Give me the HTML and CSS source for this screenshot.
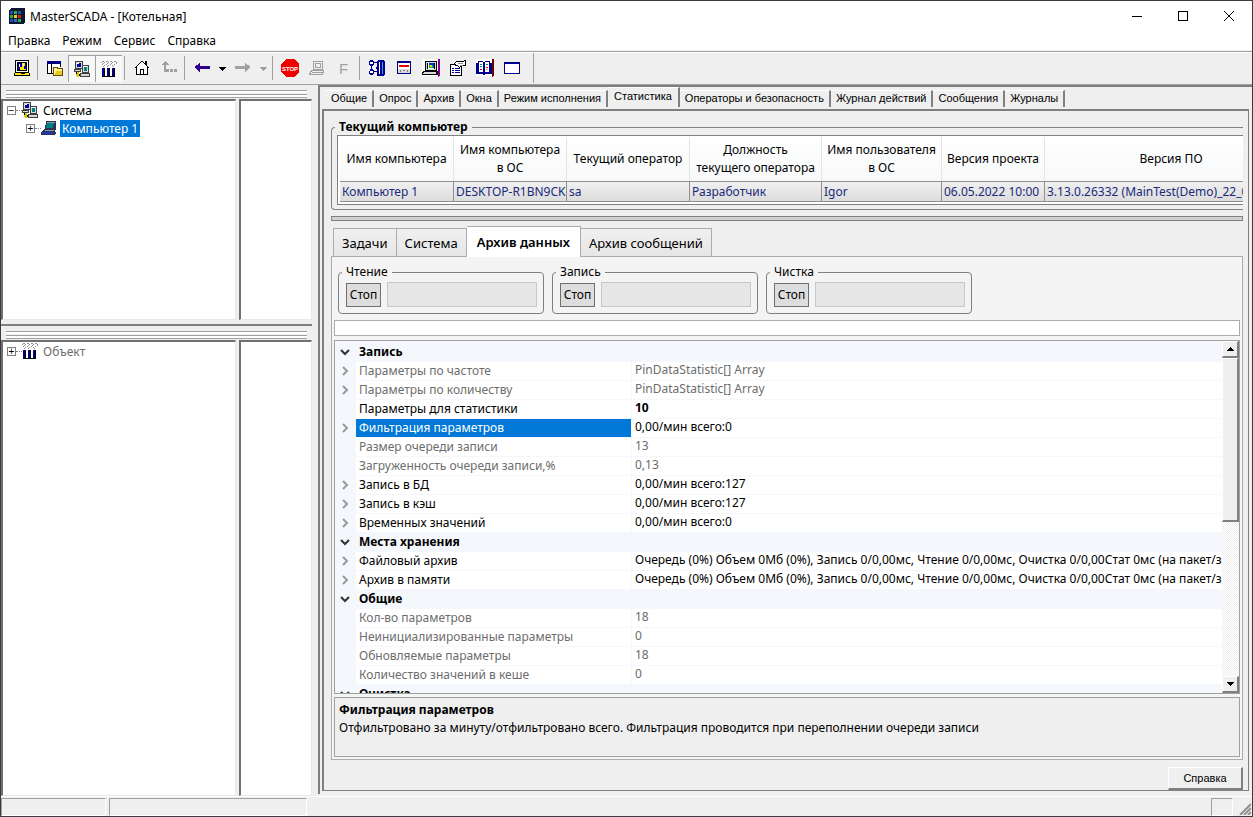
FILE: index.html
```
<!DOCTYPE html>
<html lang="ru">
<head>
  <meta charset="UTF-8">
  <meta name="viewport" content="width=device-width, initial-scale=1">
  <title>MasterSCADA - [Котельная]</title>
  <link rel="stylesheet" href="styles.css">
</head>
<body>
  <!-- shared icons -->
  <svg class="sprite" aria-hidden="true">
    <symbol id="i-net" viewBox="0 0 16 16">
      <path fill="#404040" d="M1 0h8v8H1zM0 8h7v3H0zM8 4h7v8H8zM6 12h10v4H6z"/>
      <path fill="#d8d8d8" d="M2 1h6v6H2zM1 9h5v1H1zM9 5h5v6H9zM7 13h8v2H7z"/>
      <path fill="#0000a0" d="M3 2h4v4H3z"/>
      <path fill="#fff" d="M3 2h2v1H3zM9 5h4v1H9z"/>
      <path fill="#008080" d="M10 6h3v4h-3z"/>
      <path fill="#000" d="M2 11h1v2H2zM5 13h1v2H5z"/>
      <path fill="#d8c800" d="M3 11h2v5H3zM2 13h1v2H2z"/>
    </symbol>
    <symbol id="i-plant" viewBox="0 0 16 16">
      <path fill="#909090" d="M0 1h1v1H0zM1 0h2v1H1zM3 1h1v1H3zM2 2h1v1H2zM5 0h2v1H5zM7 1h1v1H7zM6 2h1v1H6zM9 0h2v1H9zM11 1h1v1h-1zM10 2h1v1h-1zM13 0h2v1h-2zM15 1h1v2h-1zM1 3h1v1H1zM3 4h1v1H3zM5 3h1v1H5zM7 4h1v1H7zM9 3h1v1H9zM11 4h1v1h-1zM13 3h1v1h-1zM2 5h1v1H2zM6 5h1v1H6zM12 5h1v1h-1z"/>
      <path fill="#fff" d="M1 7h13v8H1z"/>
      <path fill="#000080" d="M1 7h2v8H1zM6 7h2v8H6zM11 7h2v8h-2z"/>
      <path fill="#000" d="M3 7h1v8H3zM8 7h1v8H8zM13 7h1v8h-1zM1 15h13v1H1z"/>
    </symbol>
    <symbol id="i-laptop" viewBox="0 0 16 16">
      <path fill="#303050" d="M5 1h10v9h-1v2h1v1l-2 2H0v-3l4-3z"/>
      <path fill="#008080" d="M6 3h7l-1 5H5z"/>
      <path fill="#80a0b0" d="M6 2h8v1H6zM4 10h9v1H4z"/>
      <path fill="#2038b0" d="M1 12h11v2H1z"/>
    </symbol>
    <symbol id="i-down" viewBox="0 0 10 10">
      <path fill="none" stroke="#333" stroke-width="2" d="M1 3l4 4 4-4"/>
    </symbol>
    <symbol id="i-right" viewBox="0 0 10 10">
      <path fill="none" stroke="#999" stroke-width="2" d="M3 1l4 4-4 4"/>
    </symbol>
  </svg>

  <div class="window">
    <header class="titlebar">
      <svg class="logo" viewBox="0 0 16 16">
        <path fill="#101830" d="M2 0h14v14l-2 2H0V2z"/>
        <path fill="#2050b0" d="M1 3h3v3H1zM9 3h3v3H9zM1 11h3v3H1z"/>
        <path fill="#30b040" d="M5 3h3v3H5zM1 7h3v3H1zM9 11h3v3H9z"/>
        <path fill="#f0d020" d="M5 7h3v3H5z"/>
        <path fill="#d02020" d="M9 7h3v3H9z"/>
        <path fill="#3070d0" d="M5 11h3v3H5z"/>
      </svg>
      <h1>MasterSCADA - [Котельная]</h1>
      <div class="window-buttons">
        <button aria-label="Свернуть"><svg viewBox="0 0 10 10"><path d="M0 5.500h10"/></svg></button>
        <button aria-label="Развернуть"><svg viewBox="0 0 10 10"><path d="M.5.5h9v9h-9z"/></svg></button>
        <button aria-label="Закрыть"><svg class="smooth" viewBox="0 0 10 10"><path d="M0 0l10 10M10 0L0 10"/></svg></button>
      </div>
    </header>

    <nav class="menubar">
      <button>Правка</button>
      <button>Режим</button>
      <button>Сервис</button>
      <button>Справка</button>
    </nav>

    <div class="toolbar">
      <div class="tools">
        <button class="tool" aria-label="Мастер"><svg viewBox="0 0 16 16">
          <path fill="#000" d="M1 0h14v13h1v3H0v-3h1z"/><path fill="#fff" d="M2 1h12v11H2z"/><path fill="#000" d="M3 2h10v9H3z"/>
          <path fill="#000090" d="M4 3h8v7H4z"/><path fill="#ffe800" d="M8 3h3v3h-1v3h2v1H6V7h2zM1 13h5l1 1h3l1-1h4v2H1z"/><path fill="#fff" d="M9 4h1v2H9zM5 4h1v3H5z"/>
        </svg></button>
      </div>
      <div class="tools">
        <button class="tool" aria-label="Проект"><svg viewBox="0 0 16 16">
          <path fill="#000080" d="M0 1h14v3H0z"/><path fill="#000" d="M0 4h1v9H0zM4 4h1v9H4zM0 13h6v1H0zM13 4h1v3h-1z"/><path fill="#fff" d="M1 4h3v9H1zM5 4h8v3H5z"/><path fill="#605000" d="M6 7h5v1h5v8H6z"/><path fill="#fff08a" d="M7 8h3v1h5v6H7z"/><path fill="#e8c820" d="M9 11h6v4H8z"/>
        </svg></button>
        <button class="tool pressed" aria-label="Система"><svg viewBox="0 0 16 16"><use href="#i-net"/></svg></button>
        <button class="tool pressed" aria-label="Объект"><svg viewBox="0 0 16 16"><use href="#i-plant"/></svg></button>
      </div>
      <div class="tools">
        <button class="tool" aria-label="Домой"><svg viewBox="0 0 16 16">
          <path fill="#fff" d="M8 1l5 6v7H3V7z"/><path fill="none" stroke="#000" d="M.5 8.500L8 1l7.500 7.500M2.500 7v7.500h11V7M11.500 4V1.500h1V5M6.500 14V9.500h3V14"/>
        </svg></button>
        <button class="tool" aria-label="Вверх" disabled><svg viewBox="0 0 16 16">
          <path fill="#a0a0a0" d="M0 5l4-4 4 4H5v4h3v3H3V5zM9 9h3v3H9zM13 9h3v3h-3z"/>
        </svg></button>
      </div>
      <div class="tools">
        <button class="tool" aria-label="Назад"><svg viewBox="0 0 16 16"><path fill="#300090" d="M0 7l6-4v3h10v3H6v3z"/></svg></button>
        <button class="tool drop" aria-label="История назад"><svg viewBox="0 0 8 16"><path d="M1 7h7v1H7v1H6v1H5v1H4v-1H3V9H2V8H1z"/></svg></button>
        <button class="tool" aria-label="Вперёд" disabled><svg viewBox="0 0 16 16"><path fill="#a0a0a0" d="M16 7l-6-4v3H0v3h10v3z"/></svg></button>
        <button class="tool drop" aria-label="История вперёд" disabled><svg viewBox="0 0 8 16"><path fill="#a0a0a0" d="M1 7h7v1H7v1H6v1H5v1H4v-1H3V9H2V8H1z"/></svg></button>
      </div>
      <div class="tools">
        <button class="tool stop" aria-label="Стоп"><svg viewBox="0 0 18 18">
          <path fill="#f00000" d="M5 0h8l5 5v8l-5 5H5l-5-5V5z"/><text x="9" y="12">STOP</text>
        </svg></button>
        <button class="tool" aria-label="Компьютер" disabled><svg viewBox="0 0 16 16">
          <path fill="none" stroke="#a0a0a0" d="M4.500 1.500h9v8h-9zM6.500 3.500h5v4h-5zM2.500 10.500h12l-1 4h-13z"/><path fill="#a0a0a0" d="M3 12h10v1H3z"/>
        </svg></button>
        <button class="tool letter" disabled>F</button>
      </div>
      <div class="tools">
        <button class="tool" aria-label="Связи"><svg viewBox="0 0 16 16">
          <path fill="#000090" d="M1 0h3v1h1v1h3v1H5v2H4v1H3v3h1v1h1v1h3v1H5v2H4v1H1v-1H0v-3h1V9h1V6H1V5H0V1h1zM9 0h3v16H8V9H7V7h1V1h1zM12 0h3v1h1v14h-1v1h-3z"/>
          <path fill="#fff" d="M1 2h3v2H1zM1 11h3v2H1zM10 2h1v12h-1z"/><path fill="#40a0e0" d="M13 2h1v12h-1z"/>
        </svg></button>
        <button class="tool" aria-label="Сообщения"><svg viewBox="0 0 16 16">
          <path fill="#000090" d="M1 1h14v13H1z"/><path fill="#fff" d="M2 3h12v6H2z"/><path fill="#e00000" d="M3 5h10v2H3z"/><path fill="#d8d8d8" d="M2 9h12v4H2z"/><path fill="#808080" d="M4 10h1v2H4zM7 10h2v1H7zM11 10h1v2h-1z"/>
        </svg></button>
        <button class="tool large" aria-label="Мнемосхема"><svg viewBox="0 0 18 18">
          <path fill="#800090" d="M16 0h2v16l-2 2z"/><path fill="#fff" d="M0 0h16v17H0z"/><path fill="#000" d="M3 2h12v10H3zM1 12h15v4H0v-3z"/><path fill="#d8d8d8" d="M4 3h10v8H4zM2 13h12v2H1z"/><path fill="#000" d="M5 4h8v6H5z"/><path fill="#fff" d="M6 4h6v6H6z"/><path fill="#0030d0" d="M7 4h5v5H7z"/><path fill="#00b050" d="M7 6h4v3H7z"/><path fill="#f0e000" d="M8 6h2v2H8z"/>
        </svg></button>
        <button class="tool" aria-label="Свойства"><svg viewBox="0 0 16 16">
          <path fill="#fff" stroke="#000" d="M.5 4.500h11v11H.5z"/><path fill="#000090" d="M2 8h2v1H2zM5 8h5v1H5zM2 10h2v1H2zM5 10h5v1H5zM2 12h2v1H2zM5 12h5v1H5z"/><path fill="#fff" stroke="#000" d="M3.500 4.500l3-3h6l3-1v5h-3l-3 2-2-2z"/><path fill="#909090" d="M8 3h5v1H8zM10 5h3v1h-3z"/>
        </svg></button>
        <button class="tool large" aria-label="Журнал"><svg viewBox="0 0 18 18">
          <path fill="#700000" d="M16 0h2v16l-2 2z"/><path fill="#fff" d="M0 0h16v17H0z"/><path fill="#000090" d="M0 4h2V2h5v1h2V2h5v2h2v11H9v1H7v-1H0z"/><path fill="#fff" d="M3 3h4v10H3zM9 3h4v10H9z"/><path fill="#008080" d="M4 5h2v1H4zM4 7h2v1H4zM10 5h2v1h-2z"/><path fill="#c00000" d="M4 10h2v1H4zM10 8h2v1h-2z"/><path fill="#d0b000" d="M10 10h2v1h-2z"/>
        </svg></button>
        <button class="tool" aria-label="Окно"><svg viewBox="0 0 16 16">
          <path fill="#000090" d="M0 2h16v12H0z"/><path fill="#fff" d="M1 4h14v9H1z"/>
        </svg></button>
      </div>
    </div>

    <div class="workspace">
      <aside class="side">
        <section class="dock dock-system">
          <div class="grip"></div>
          <div class="panes">
            <ul class="pane tree">
              <li><span class="box">−</span><span class="dots"></span><svg viewBox="0 0 16 16"><use href="#i-net"/></svg><span class="node">Система</span></li>
              <li class="child"><span class="box">+</span><span class="dots"></span><svg viewBox="0 0 16 16"><use href="#i-laptop"/></svg><span class="node selected">Компьютер 1</span></li>
            </ul>
            <div class="pane"></div>
          </div>
        </section>
        <section class="dock dock-object">
          <div class="grip"></div>
          <div class="panes">
            <ul class="pane tree">
              <li><span class="box">+</span><span class="dots"></span><svg viewBox="0 0 16 16"><use href="#i-plant"/></svg><span class="node muted">Объект</span></li>
            </ul>
            <div class="pane"></div>
          </div>
        </section>
      </aside>

      <main class="main">
        <div class="page-tabs" role="tablist">
          <button role="tab">Общие</button>
          <button role="tab">Опрос</button>
          <button role="tab">Архив</button>
          <button role="tab">Окна</button>
          <button role="tab">Режим исполнения</button>
          <button role="tab" class="active" aria-selected="true">Статистика</button>
          <button role="tab">Операторы и безопасность</button>
          <button role="tab">Журнал действий</button>
          <button role="tab">Сообщения</button>
          <button role="tab">Журналы</button>
        </div>

        <div class="page">
          <fieldset class="computer">
            <legend>Текущий компьютер</legend>
            <div class="table-wrap">
              <table class="computer-table">
                <colgroup><col><col><col><col><col><col><col></colgroup>
                <thead>
                  <tr>
                    <th>Имя компьютера</th>
                    <th>Имя компьютера<br>в ОС</th>
                    <th>Текущий оператор</th>
                    <th>Должность<br>текущего оператора</th>
                    <th>Имя пользователя<br>в ОС</th>
                    <th>Версия проекта</th>
                    <th>Версия ПО</th>
                  </tr>
                </thead>
                <tbody>
                  <tr>
                    <td>Компьютер 1</td>
                    <td>DESKTOP-R1BN9CK</td>
                    <td>sa</td>
                    <td>Разработчик</td>
                    <td>Igor</td>
                    <td>06.05.2022 10:00</td>
                    <td>3.13.0.26332 (MainTest(Demo)_22_04_</td>
                  </tr>
                </tbody>
              </table>
            </div>
          </fieldset>

          <div class="splitter"></div>

          <div class="data-tabs" role="tablist">
            <button role="tab">Задачи</button>
            <button role="tab">Система</button>
            <button role="tab" class="active" aria-selected="true">Архив данных</button>
            <button role="tab">Архив сообщений</button>
          </div>

          <div class="data-page">
            <div class="operations">
              <fieldset><legend>Чтение</legend><button>Стоп</button><div class="progress"></div></fieldset>
              <fieldset><legend>Запись</legend><button>Стоп</button><div class="progress"></div></fieldset>
              <fieldset><legend>Чистка</legend><button>Стоп</button><div class="progress"></div></fieldset>
            </div>

            <input class="search" type="text" aria-label="Поиск">

            <div class="props">
              <div class="props-view">
                <table class="props-table">
                  <colgroup><col class="c-arrow"><col class="c-name"><col></colgroup>
                  <tbody>
                    <tr class="group"><td><svg><use href="#i-down"/></svg></td><th colspan="2">Запись</th></tr>
                    <tr class="muted"><td><svg><use href="#i-right"/></svg></td><th>Параметры по частоте</th><td>PinDataStatistic[] Array</td></tr>
                    <tr class="muted"><td><svg><use href="#i-right"/></svg></td><th>Параметры по количеству</th><td>PinDataStatistic[] Array</td></tr>
                    <tr><td></td><th>Параметры для статистики</th><td><b>10</b></td></tr>
                    <tr class="selected"><td><svg><use href="#i-right"/></svg></td><th>Фильтрация параметров</th><td>0,00/мин всего:0</td></tr>
                    <tr class="muted"><td></td><th>Размер очереди записи</th><td>13</td></tr>
                    <tr class="muted"><td></td><th>Загруженность очереди записи,%</th><td>0,13</td></tr>
                    <tr><td><svg><use href="#i-right"/></svg></td><th>Запись в БД</th><td>0,00/мин всего:127</td></tr>
                    <tr><td><svg><use href="#i-right"/></svg></td><th>Запись в кэш</th><td>0,00/мин всего:127</td></tr>
                    <tr><td><svg><use href="#i-right"/></svg></td><th>Временных значений</th><td>0,00/мин всего:0</td></tr>
                    <tr class="group"><td><svg><use href="#i-down"/></svg></td><th colspan="2">Места хранения</th></tr>
                    <tr><td><svg><use href="#i-right"/></svg></td><th>Файловый архив</th><td>Очередь (0%) Объем 0Мб (0%), Запись 0/0,00мс, Чтение 0/0,00мс, Очистка 0/0,00Стат 0мс (на пакет/значение)</td></tr>
                    <tr><td><svg><use href="#i-right"/></svg></td><th>Архив в памяти</th><td>Очередь (0%) Объем 0Мб (0%), Запись 0/0,00мс, Чтение 0/0,00мс, Очистка 0/0,00Стат 0мс (на пакет/значение)</td></tr>
                    <tr class="group"><td><svg><use href="#i-down"/></svg></td><th colspan="2">Общие</th></tr>
                    <tr class="muted"><td></td><th>Кол-во параметров</th><td>18</td></tr>
                    <tr class="muted"><td></td><th>Неинициализированные параметры</th><td>0</td></tr>
                    <tr class="muted"><td></td><th>Обновляемые параметры</th><td>18</td></tr>
                    <tr class="muted"><td></td><th>Количество значений в кеше</th><td>0</td></tr>
                    <tr class="group"><td><svg><use href="#i-down"/></svg></td><th colspan="2">Очистка</th></tr>
                  </tbody>
                </table>
              </div>
              <div class="scrollbar">
                <button aria-label="Вверх"><svg viewBox="0 0 7 4"><path d="M3 0h1v1h1v1h1v1h1v1H0V3h1V2h1V1h1z"/></svg></button>
                <div class="thumb"></div>
                <div class="track"></div>
                <button aria-label="Вниз"><svg viewBox="0 0 7 4"><path d="M0 0h7v1H6v1H5v1H4v1H3V3H2V2H1V1H0z"/></svg></button>
              </div>
            </div>

            <div class="hint">
              <h2>Фильтрация параметров</h2>
              <p>Отфильтровано за минуту/отфильтровано всего. Фильтрация проводится при переполнении очереди записи</p>
            </div>
          </div>

          <div class="actions"><button class="help">Справка</button></div>
        </div>
      </main>
    </div>

    <footer class="statusbar">
      <div class="cell cell-a"></div>
      <div class="cell cell-b"></div>
      <div class="cell cell-c"></div>
      <svg class="sizer" viewBox="0 0 12 12"><path stroke="#909090" stroke-width="2" d="M1 12L12 1M5 12l7-7M9 12l3-3"/></svg>
    </footer>
  </div>
</body>
</html>
```

FILE: styles.css
```
* {
  box-sizing: border-box;
}
body {
  margin: 0;
  font-family: "Noto Sans", "Open Sans", sans-serif;
  font-size: 12px;
  color: #000;
}
button {
  font: inherit;
  color: inherit;
  background: none;
  border: 0;
  padding: 0;
}
svg {
  display: block;
  width: 16px;
  height: 16px;
  shape-rendering: crispEdges;
}
.smooth {
  shape-rendering: auto;
}
.sprite {
  position: absolute;
  width: 0;
  height: 0;
}
.window {
  display: flex;
  flex-direction: column;
  height: 100vh;
  min-height: 600px;
  background: #efefef;
  border: 1px solid #3c3b44;
}

/* title and menu */
.titlebar {
  display: flex;
  align-items: center;
  height: 30px;
  padding-left: 8px;
  background: #fff;
}
.titlebar h1 {
  flex: 1;
  margin: 0 0 0 5px;
  font-size: 12px;
  font-weight: normal;
}
.window-buttons {
  display: flex;
}
.window-buttons button {
  width: 46px;
  height: 30px;
  display: grid;
  place-items: center;
}
.window-buttons svg {
  width: 10px;
  height: 10px;
  fill: none;
  stroke: #000;
}
.menubar {
  display: flex;
  gap: 12px;
  height: 20px;
  padding-left: 7px;
  background: #fff;
  border-bottom: 1px solid #f0f0f0;
}

/* toolbar */
.toolbar {
  display: flex;
  height: 34px;
  border-top: 1px solid #a0a0a0;
  border-bottom: 1px solid #a0a0a0;
  box-shadow: inset 0 1px #fff;
  padding-left: 4px;
}
.tools {
  display: flex;
  align-items: center;
  padding: 2px 2px 2px 3px;
  border-right: 1px solid #a0a0a0;
  margin: 4px 0;
}
.tools:last-child {
  margin: 1px 0;
  padding-right: 8px;
}
.tool {
  width: 27px;
  height: 27px;
  display: grid;
  place-items: center;
}
.tool.drop {
  width: 14px;
}
.tool.drop svg {
  width: 8px;
}
.tool.pressed {
  background: #f8f8f8;
  border-top: 1px solid #a0a0a0;
  border-left: 1px solid #a0a0a0;
}
.tool.stop svg,
.tool.large svg {
  width: 18px;
  height: 18px;
}
.tool.stop text {
  fill: #fff;
  font: bold 6px "Liberation Sans", sans-serif;
  text-anchor: middle;
}
.tool.letter {
  color: #a0a0a0;
  font: 15px "Liberation Sans", sans-serif;
}

/* docked trees */
.workspace {
  flex: 1;
  display: flex;
  min-height: 0;
}
.side {
  display: flex;
  flex-direction: column;
  width: 317px;
}
.dock {
  display: flex;
  flex-direction: column;
  width: 311px;
}
.dock-system {
  flex: 237 1 0;
  padding-bottom: 4px;
  border-bottom: 2px solid #808080;
}
.dock-object {
  flex: 473 1 0;
}
.grip {
  height: 8px;
  margin: 5px 5px 1px;
  border: solid #a0a0a0;
  border-width: 1px 0;
  background: linear-gradient(#fff 2px, #efefef 2px, #efefef 3px, #a0a0a0 3px, #a0a0a0 4px, #fff 4px);
}
.panes {
  flex: 1;
  display: flex;
  gap: 3px;
}
.pane {
  flex: 1;
  margin: 0;
  padding: 0;
  background: #fff;
  border: 1px solid #e8e8e8;
  border-top: 2px solid #707070;
  border-left: 2px solid #707070;
}
.tree {
  flex: none;
  width: 235px;
  list-style: none;
}
.tree li {
  display: flex;
  align-items: center;
  height: 18px;
  padding-left: 4px;
}
.tree .child {
  padding-left: 23px;
}
.box {
  display: grid;
  place-items: center;
  width: 9px;
  height: 9px;
  border: 1px solid #808080;
  font: 10px/7px "Liberation Sans", sans-serif;
}
.dots {
  width: 6px;
  border-top: 1px dotted #808080;
}
.node {
  margin-left: 3px;
  padding: 0 2px;
  line-height: 17px;
}
.node.selected {
  background: #0078d7;
  color: #fff;
}
.muted {
  color: #6d6d6d;
}

/* right side */
.main {
  flex: 1;
  display: flex;
  flex-direction: column;
  min-width: 0;
  margin-bottom: 2px;
  border: solid #808080;
  border-width: 2px 0 0 2px;
}
.page-tabs {
  display: flex;
  align-items: flex-end;
  height: 20px;
  padding: 0 6px;
}
.page-tabs button {
  height: 17px;
  padding: 0 5px 2px;
  border-top: 1px solid #fff;
  border-right: 2px solid #808080;
  font: 11px "Liberation Sans", sans-serif;
  white-space: nowrap;
}
.page-tabs .active {
  height: 20px;
  padding: 0 6px 4px;
}
.page {
  flex: 1;
  display: flex;
  flex-direction: column;
  min-height: 0;
  margin: 2px 3px 3px 2px;
  padding: 8px 5px 0 7px;
  border: 2px solid #808080;
  border-width: 2px 1px 1px 2px;
}
fieldset {
  min-width: 0;
  margin: 0;
  padding: 0;
  border: 1px solid #808080;
  border-radius: 4px;
}
legend {
  margin-left: -4px;
  padding: 0 4px;
  line-height: 16px;
}
.computer {
  border-right: 0;
  border-radius: 4px 0 0 4px;
  padding: 0 0 4px 5px;
}
.computer legend {
  margin-left: -2px;
  font-size: 12px;
  font-weight: bold;
}
.table-wrap {
  overflow: hidden;
  padding: 1px 0 2px 2px;
  background: #fff;
  border: solid #808080;
  border-width: 1px 0 1px 1px;
}
.computer-table {
  width: 958px;
  table-layout: fixed;
  border-collapse: separate;
  border-spacing: 0;
  white-space: nowrap;
}
.computer-table col:nth-child(1) { width: 114px; }
.computer-table col:nth-child(2) { width: 113px; }
.computer-table col:nth-child(3) { width: 123px; }
.computer-table col:nth-child(4) { width: 132px; }
.computer-table col:nth-child(5) { width: 120px; }
.computer-table col:nth-child(6) { width: 103px; }
.computer-table th {
  height: 44px;
  padding: 0;
  font-size: 12px;
  font-weight: normal;
  line-height: 18px;
  background: linear-gradient(#fff, #f7f8f9);
  border-right: 1px solid #e4e4e4;
}
.computer-table td {
  height: 21px;
  padding: 0 2px;
  color: #1a2a7a;
  background: linear-gradient(#f0f0f0, #dcdcdc);
  border: solid #909090;
  border-width: 1px 1px 1px 0;
}
.splitter {
  flex: none;
  height: 5px;
  margin: 6px 0 5px;
  background: #d0d0d0;
  border: 1px solid #808080;
}

.data-tabs {
  display: flex;
  align-items: flex-end;
  height: 30px;
  padding-left: 2px;
}
.data-tabs button {
  height: 28px;
  padding: 0 8px;
  font-size: 13px;
  background: linear-gradient(#f0f0f0, #e6e6e6);
  border: 1px solid #acacac;
  border-width: 1px 1px 0 0;
}
.data-tabs button:first-child {
  border-left-width: 1px;
}
.data-tabs .active {
  height: 31px;
  margin-bottom: -1px;
  z-index: 1;
  padding: 0 10px;
  background: #fff;
  font-weight: 600;
}
.data-page {
  flex: 1;
  display: flex;
  flex-direction: column;
  min-height: 0;
  padding: 7px 2px 2px;
  background: #f4f4f4;
  border: 1px solid #acacac;
}
.operations {
  display: flex;
  gap: 8px;
  padding: 0 4px;
}
.operations fieldset {
  display: flex;
  align-items: center;
  gap: 6px;
  width: 206px;
  height: 50px;
  padding: 0 6px 4px 7px;
}
.operations button {
  width: 35px;
  height: 24px;
  background: #ddd;
  border: 1px solid #707070;
}
.progress {
  flex: 1;
  height: 25px;
  background: #e6e6e6;
  border: 1px solid #c8c8c8;
}
.search {
  height: 16px;
  margin: 6px 0 4px;
  padding: 0 2px;
  border: 1px solid #abadb3;
  font: inherit;
}

/* property grid */
.props {
  flex: 1;
  display: flex;
  min-height: 0;
  background: #fff;
  border: 1px solid #a0a0a0;
}
.props-view {
  flex: 1;
  min-width: 0;
  overflow: hidden;
  padding-top: 2px;
  background: #f4f7fc;
}
.props-table {
  width: 100%;
  table-layout: fixed;
  border-collapse: separate;
  border-spacing: 0;
}
.c-arrow {
  width: 21px;
}
.c-name {
  width: 275px;
}
.props-table th,
.props-table td {
  height: 19px;
  padding: 0 3px;
  overflow: hidden;
  line-height: 18px;
  font-weight: normal;
  text-align: left;
  white-space: nowrap;
  background: #fff;
  border-bottom: 1px solid #f4f7fc;
}
.props-table th + td {
  border-left: 1px solid #f4f7fc;
  line-height: 16px;
  vertical-align: top;
}
.props-table td:first-child {
  padding: 0 5px;
  background: #f4f7fc;
}
.props-table svg {
  width: 10px;
  height: 10px;
  shape-rendering: auto;
}
.props-table .group th {
  font-weight: bold;
  background: #f4f7fc;
}
.props-table .selected th {
  color: #fff;
  background: #0078d7;
}
.scrollbar {
  display: flex;
  flex-direction: column;
  width: 17px;
}
.scrollbar button,
.thumb,
.help {
  background: #efefef;
  border: 1px solid #fff;
  border-right: 2px solid #808080;
  border-bottom: 2px solid #808080;
}
.scrollbar button {
  height: 17px;
  display: grid;
  place-items: center;
}
.scrollbar svg {
  width: 7px;
  height: 4px;
}
.thumb {
  flex: 162;
}
.track {
  flex: 155;
  background: repeating-conic-gradient(#fff 0 25%, #efefef 0 50%) 0 0 / 2px 2px;
}

.hint {
  height: 60px;
  margin-top: 3px;
  padding: 3px 4px;
  background: #efefef;
  border: 1px solid #a0a0a0;
}
.hint h2,
.hint p {
  margin: 0;
  font-size: 12px;
  line-height: 18px;
}
.actions {
  display: flex;
  justify-content: flex-end;
  padding-top: 7px;
}
.help {
  width: 75px;
  height: 23px;
  font: 11px "Liberation Sans", sans-serif;
}

/* status bar */
.statusbar {
  display: flex;
  align-items: flex-end;
  gap: 3px;
  height: 20px;
  border-top: 1px solid #fff;
}
.cell {
  height: 18px;
  border: 1px solid #a0a0a0;
  border-right-color: #fff;
  border-bottom-color: #fff;
}
.cell-a {
  width: 105px;
}
.cell-b {
  width: 198px;
}
.cell-c {
  width: 22px;
  margin-left: auto;
}
.sizer {
  width: 12px;
  height: 12px;
  margin: 0 1px 1px 3px;
  shape-rendering: auto;
}
```
